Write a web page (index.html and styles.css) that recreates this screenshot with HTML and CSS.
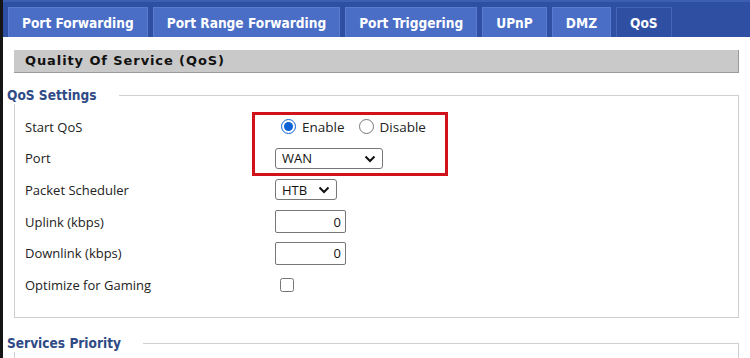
FILE: index.html
```html
<!DOCTYPE html>
<html lang="en">
<head>
  <meta charset="UTF-8" />
  <meta name="viewport" content="width=device-width, initial-scale=1.0"/>
  <title>Quality Of Service (QoS)</title>
  <link rel="stylesheet" href="styles.css">
</head>
<body>
  <div class="page">
    <ul class="tabs">
      <li><a href="#">Port Forwarding</a></li>
      <li><a href="#">Port Range Forwarding</a></li>
      <li><a href="#">Port Triggering</a></li>
      <li><a href="#">UPnP</a></li>
      <li><a href="#">DMZ</a></li>
      <li class="active"><a href="#">QoS</a></li>
    </ul>
    <div class="content">
      <h2 class="title">Quality Of Service (QoS)</h2>
      <fieldset class="group">
        <legend>QoS Settings</legend>
        <div class="row">
          <span class="label">Start QoS</span>
          <div class="ctl">
            <label class="opt"><input type="radio" name="qos" checked> Enable</label>
            <label class="opt"><input type="radio" name="qos"> Disable</label>
          </div>
        </div>
        <div class="row">
          <span class="label">Port</span>
          <div class="ctl">
            <span class="select wide">
              <select><option>WAN</option></select>
              <svg class="chev" viewBox="0 0 12 8" width="12" height="8"><path d="M1.5 1.5 L6 6 L10.5 1.5" fill="none" stroke="#111" stroke-width="2"/></svg>
            </span>
          </div>
        </div>
        <div class="row">
          <span class="label">Packet Scheduler</span>
          <div class="ctl">
            <span class="select narrow">
              <select><option>HTB</option></select>
              <svg class="chev" viewBox="0 0 12 8" width="12" height="8"><path d="M1.5 1.5 L6 6 L10.5 1.5" fill="none" stroke="#111" stroke-width="2"/></svg>
            </span>
          </div>
        </div>
        <div class="row">
          <span class="label">Uplink (kbps)</span>
          <div class="ctl"><input class="num" type="text" value="0"></div>
        </div>
        <div class="row">
          <span class="label">Downlink (kbps)</span>
          <div class="ctl"><input class="num" type="text" value="0"></div>
        </div>
        <div class="row">
          <span class="label">Optimize for Gaming</span>
          <div class="ctl"><input class="check" type="checkbox"></div>
        </div>
      </fieldset>
      <fieldset class="group">
        <legend>Services Priority</legend>
      </fieldset>
      <div class="highlight"></div>
    </div>
  </div>
</body>
</html>
```

FILE: styles.css
```css
body { margin: 0; background: #fff; font-family: 'Open Sans', sans-serif; color: #222; }
.page { border-left: 3px solid #151515; height: 358px; overflow: hidden; box-sizing: border-box; }

.tabs { display: flex; gap: 5px; list-style: none; margin: 0; padding: 5px 0 0 5px; height: 37px; box-sizing: border-box;
        background: #2f50a2; border-top: 2px solid #3d5fb3; }
.tabs li { background: #4a6dc6; border: 1px solid #5a7bd0; border-bottom: none; }
.tabs li.active { background: #2f50a2; border-color: #4464b8; }
.tabs a { display: block; padding: 2px 13px 0; line-height: 27px; color: #fff; text-decoration: none;
          font-family: 'DejaVu Sans Condensed', 'DejaVu Sans', sans-serif; font-weight: bold; font-size: 13.6px; }

.content { position: relative; padding: 13px 11px 0 11px; }
.title { margin: 0; background: #c9c9c9; border-bottom: 1px solid #9a9a9a; border-right: 1px solid #9a9a9a; height: 23px; box-sizing: border-box;
         padding-left: 11px; font-family: 'DejaVu Sans', sans-serif; font-size: 13px; line-height: 22px; letter-spacing: 0.9px; color: #111; }

.group { margin: 14px 0 0 0; padding: 7px 0 16px 10px; border: 1px solid #cfcfcf; }
.group legend { margin-left: -18px; padding: 0 22px 0 0; font-family: 'DejaVu Sans Condensed', 'DejaVu Sans', sans-serif; font-weight: bold;
                font-size: 13.6px; color: #2f4a85; line-height: 17px; }
.group + .group { margin-top: 17px; height: 40px; }

.row { display: grid; grid-template-columns: 250px auto; align-items: center; height: 31.6px; font-size: 13px; }
.ctl { display: flex; align-items: center; }
.opt { display: inline-flex; align-items: center; margin-right: 8px; font-size: 13.5px; }
.opt input { margin: 0 6px 0 6px; width: 15px; height: 15px; accent-color: #0b63d6; }

.select { position: relative; display: inline-block; }
.select select { appearance: none; height: 21px; border: 1px solid #777; border-radius: 3px; background: #fff;
                 font-family: 'Open Sans', sans-serif; font-size: 13px; padding: 0 0 0 6px; color: #111; }
.select.wide select { width: 108px; }
.select.narrow select { width: 62px; }
.chev { position: absolute; right: 7px; top: 7px; pointer-events: none; }

.num { width: 71px; height: 23px; box-sizing: border-box; border: 1px solid #777; border-radius: 2px; text-align: right;
       font-family: 'Open Sans', sans-serif; font-size: 13px; padding: 0 4px; color: #111; }
.check { margin: 0 0 0 5px; width: 14px; height: 14px; }

.highlight { position: absolute; left: 249px; top: 75px; width: 190px; height: 58px; border: 3px solid #d2121b; }
```
